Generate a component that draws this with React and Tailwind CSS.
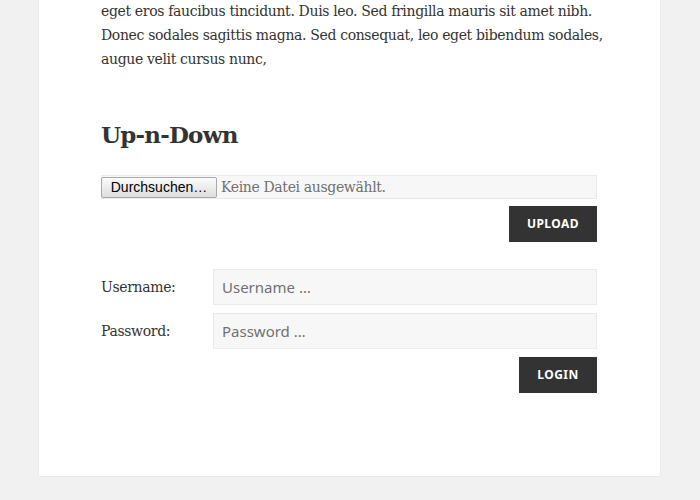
export default function App() {
  const serif = { fontFamily: '"DejaVu Serif", "Liberation Serif", serif' };
  return (
    <div className="min-h-[500px] bg-[#f1f1f1] overflow-hidden">
      <div
        className="ml-[39px] w-[621px] bg-white shadow-[0_0_1px_rgba(0,0,0,0.15)] pl-[62px] pr-[63px] pb-[83px] text-[#333]"
        style={serif}
      >
        <p className="text-[14px] leading-[24px] -mt-[1px] tracking-[-0.35px]">
          <span className="block whitespace-nowrap">eget eros faucibus tincidunt. Duis leo. Sed fringilla mauris sit amet nibh.</span>
          <span className="block whitespace-nowrap">Donec sodales sagittis magna. Sed consequat, leo eget bibendum sodales,</span>
          <span className="block whitespace-nowrap">augue velit cursus nunc,</span>
        </p>
        <h2 className="mt-[49px] text-[23px] leading-[30px] font-bold tracking-[-0.8px]">Up-n-Down</h2>
        <div className="mt-[25px] h-[24px] flex items-center bg-[#f7f7f7] border border-[#eaeaea]">
          <span
            className="h-[21px] w-[116px] -ml-px flex items-center justify-center text-[14px] text-black border border-[#a9a9a9] rounded-[2px] bg-gradient-to-b from-[#fbfbfb] to-[#dedede]"
            style={{ fontFamily: '"Liberation Sans", Arial, sans-serif' }}
          >
            Durchsuchen…
          </span>
          <span className="ml-[4px] text-[14px] tracking-[-0.35px] text-[#707070]">Keine Datei ausgewählt.</span>
        </div>
        <div className="flex justify-end mt-[7px]">
          <button
            className="h-[36px] w-[88px] bg-[#333] border border-[#333] text-white text-[12px] font-bold uppercase tracking-[0.04em]"
            style={{ fontFamily: '"Noto Sans", sans-serif' }}
          >
            Upload
          </button>
        </div>
        <div className="mt-[27px] flex flex-col gap-[8px]">
          <div className="flex items-center">
            <label className="w-[112px] text-[14px] tracking-[-0.35px]">Username:</label>
            <div
              className="flex-1 h-[36px] flex items-center px-[8px] bg-[#f7f7f7] border border-[#eaeaea] text-[15px] text-[#707070]"
              style={{ fontFamily: '"Noto Sans", sans-serif' }}
            >
              Username …
            </div>
          </div>
          <div className="flex items-center">
            <label className="w-[112px] text-[14px] tracking-[-0.35px]">Password:</label>
            <div
              className="flex-1 h-[36px] flex items-center px-[8px] bg-[#f7f7f7] border border-[#eaeaea] text-[15px] text-[#707070]"
              style={{ fontFamily: '"Noto Sans", sans-serif' }}
            >
              Password …
            </div>
          </div>
          <div className="flex justify-end">
            <button
              className="h-[36px] w-[78px] bg-[#333] border border-[#333] text-white text-[12px] font-bold uppercase tracking-[0.04em]"
              style={{ fontFamily: '"Noto Sans", sans-serif' }}
            >
              Login
            </button>
          </div>
        </div>
      </div>
    </div>
  );
}
